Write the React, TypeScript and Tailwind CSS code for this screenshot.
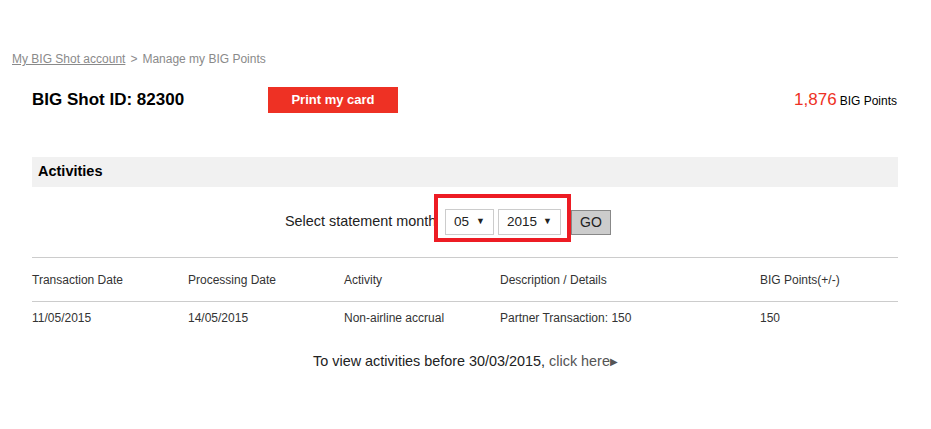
import React from "react";

function App() {
  const cols = "grid grid-cols-[156px_156px_156px_260px_1fr]";
  return (
    <div className="w-[931px] h-[429px] bg-white font-['Liberation_Sans',Arial,sans-serif] text-[#222]">
      <div className="pt-[52px] pl-3 text-[12px] leading-[14px] text-[#8a8a8a]">
        <a href="#" className="underline">My BIG Shot account</a>
        <span className="mx-[5px]">&gt;</span>
        <span>Manage my BIG Points</span>
      </div>

      <div className="mx-8 w-[866px]">
        <div className="flex items-center mt-[21px] h-[26px]">
          <h1 className="text-[17px] font-bold text-black w-[236px] whitespace-nowrap">
            BIG Shot ID: 82300
          </h1>
          <button className="h-[26px] w-[130px] bg-[#ee3124] text-white text-[13px] font-bold">
            Print my card
          </button>
          <div className="ml-auto flex items-baseline mr-[1px]">
            <span className="text-[17px] text-[#ee3124]">1,876</span>
            <span className="ml-[3px] text-[12px] text-black">BIG Points</span>
          </div>
        </div>

        <div className="mt-11 h-[30px] bg-[#f1f1f1] flex items-center px-[6px]">
          <h2 className="text-[14.5px] font-bold text-black">Activities</h2>
        </div>

        <div className="flex items-center h-[70px] pl-[253px]">
          <span className="text-[14.4px] text-[#222] w-[160px] whitespace-nowrap">Select statement month</span>
          <div className="relative flex items-center gap-[4px]">
            <div className="flex items-center justify-between h-[26px] w-[49px] border border-[#ccc] px-[8px] text-[13.5px]">
              <span>05</span>
              <span className="text-[9px]">▼</span>
            </div>
            <div className="flex items-center justify-between h-[26px] w-[63px] border border-[#ccc] px-[8px] text-[13.5px]">
              <span>2015</span>
              <span className="text-[9px]">▼</span>
            </div>
            <div className="absolute -left-[11px] -right-[10px] -top-[15px] -bottom-[7px] border-[4px] border-[#ed1c24] pointer-events-none" />
          </div>
          <button className="ml-[10px] h-[25px] w-[40px] bg-[#cccccc] border border-[#888] text-[14px] text-[#222]">
            GO
          </button>
        </div>

        <div className="border-t border-[#ccc]">
          <div className={`${cols} h-[43px] items-center text-[12px] text-[#333]`}>
            <span>Transaction Date</span>
            <span>Processing Date</span>
            <span>Activity</span>
            <span>Description / Details</span>
            <span>BIG Points(+/-)</span>
          </div>
          <div className={`${cols} border-t border-[#ccc] h-[32px] items-center text-[12px] text-[#333]`}>
            <span>11/05/2015</span>
            <span>14/05/2015</span>
            <span>Non-airline accrual</span>
            <span>Partner Transaction: 150</span>
            <span>150</span>
          </div>
        </div>

        <p className="mt-[18px] text-center text-[14.4px] text-[#222] pl-[1px]">
          To view activities before 30/03/2015,{" "}
          <a href="#" className="text-[#555]">click here</a>
          <span className="text-[10px] text-[#555] align-[1px]">▶</span>
        </p>
      </div>
    </div>
  );
}

export default App;
